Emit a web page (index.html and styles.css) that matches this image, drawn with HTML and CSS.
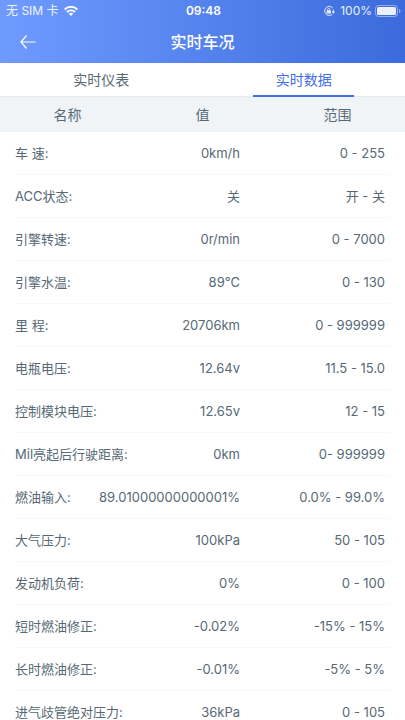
FILE: index.html
```html
<!DOCTYPE html>
<html lang="zh-CN">
<head>
<meta charset="utf-8">
<meta name="viewport" content="width=device-width, initial-scale=1">
<title>实时车况</title>
<link rel="stylesheet" href="styles.css">
</head>
<body>
<header class="header">
  <div class="status">
    <div class="status-left">
      <span>无 SIM 卡</span>
      <svg class="wifi" viewBox="0 0 14 10" aria-hidden="true">
        <path d="M.7 3.500C4.300-.1 9.700-.1 13.300 3.500M3 6C5.200 3.800 8.800 3.800 11 6" fill="none" stroke="currentColor" stroke-width="1.900"/>
        <path d="M4.700 7.700Q7 5.700 9.300 7.700L7 10Z" fill="currentColor"/>
      </svg>
    </div>
    <time class="clock">09:48</time>
    <div class="status-right">
      <svg class="lock" viewBox="0 0 12 12" aria-hidden="true">
        <path d="M9.700 3A4.500 4.500 0 1 0 9.200 9.300M10.300 4.500Q10.700 6 10.200 7.300" fill="none" stroke="currentColor"/>
        <path d="M8.600 6.500H12L10.300 8.700Z" fill="currentColor"/>
        <rect x="3.700" y="5.300" width="4.200" height="3.200" rx=".5" fill="currentColor"/>
        <path d="M4.600 5.500V4.600a1.200 1.200 0 0 1 2.400 0V5.500" fill="none" stroke="currentColor" stroke-width=".8"/>
      </svg>
      <span class="charge">100%
        <svg class="battery" viewBox="0 0 26 12" aria-hidden="true">
          <rect x=".5" y=".5" width="22" height="11" rx="3" fill="none" stroke="currentColor" opacity=".5"/>
          <rect x="2" y="2" width="19" height="8" rx="1.500" fill="currentColor"/>
          <path d="M24 4Q25.500 4.500 25.500 6T24 8Z" fill="currentColor" opacity=".5"/>
        </svg>
      </span>
    </div>
  </div>
  <div class="titlebar">
    <button class="back" type="button" aria-label="返回">
      <svg viewBox="0 0 16 14" aria-hidden="true"><path d="M6.500 .5L1 7l5.500 6.500M1 7h14.500" fill="none" stroke="currentColor" stroke-width="1.200"/></svg>
    </button>
    <h1 class="title">实时车况</h1>
  </div>
</header>
<nav class="tabs">
  <a class="tab" href="#gauges">实时仪表</a>
  <a class="tab active" href="#data" aria-current="page">实时数据</a>
</nav>
<main id="data">
  <table class="table">
    <thead><tr><th>名称</th><th>值</th><th>范围</th></tr></thead>
    <tbody>
      <tr><td class="name">车 速:</td><td class="value">0km/h</td><td class="range">0 - 255</td></tr>
      <tr><td class="name">ACC状态:</td><td class="value">关</td><td class="range">开 - 关</td></tr>
      <tr><td class="name">引擎转速:</td><td class="value">0r/min</td><td class="range">0 - 7000</td></tr>
      <tr><td class="name">引擎水温:</td><td class="value">89°C</td><td class="range">0 - 130</td></tr>
      <tr><td class="name">里 程:</td><td class="value">20706km</td><td class="range">0 - 999999</td></tr>
      <tr><td class="name">电瓶电压:</td><td class="value">12.64v</td><td class="range">11.5 - 15.0</td></tr>
      <tr><td class="name">控制模块电压:</td><td class="value">12.65v</td><td class="range">12 - 15</td></tr>
      <tr><td class="name">Mil亮起后行驶距离:</td><td class="value">0km</td><td class="range">0- 999999</td></tr>
      <tr><td class="name">燃油输入:</td><td class="value">89.01000000000001%</td><td class="range">0.0% - 99.0%</td></tr>
      <tr><td class="name">大气压力:</td><td class="value">100kPa</td><td class="range">50 - 105</td></tr>
      <tr><td class="name">发动机负荷:</td><td class="value">0%</td><td class="range">0 - 100</td></tr>
      <tr><td class="name">短时燃油修正:</td><td class="value">-0.02%</td><td class="range">-15% - 15%</td></tr>
      <tr><td class="name">长时燃油修正:</td><td class="value">-0.01%</td><td class="range">-5% - 5%</td></tr>
      <tr><td class="name">进气歧管绝对压力:</td><td class="value">36kPa</td><td class="range">0 - 105</td></tr>
    </tbody>
  </table>
</main>
</body>
</html>
```
FILE: styles.css
```css
* {
  box-sizing: border-box;
}

html {
  scrollbar-width: none;
}

body {
  margin: 0;
  background: #fff;
  color: #566975;
  font: 13px/20px Inter, "Noto Sans CJK SC", sans-serif;
}

.header {
  color: #fff;
  background: linear-gradient(90deg, #6f9bff, #3b6bdc);
}

.status {
  display: grid;
  grid-template-columns: 1fr auto 1fr;
  align-items: center;
  height: 21px;
  padding: 0 4px 0 6px;
  font-size: 12px;
}

.status-left,
.status-right,
.charge {
  display: flex;
  align-items: center;
}

.status-left {
  gap: 5px;
}

.status-right {
  justify-content: flex-end;
  gap: 5px;
}

.charge {
  gap: 3px;
}

.status-left span,
.status-right {
  opacity: 0.9;
}

.clock {
  font-weight: 600;
}

.wifi {
  width: 14px;
  height: 10px;
}

.lock {
  width: 12px;
  height: 12px;
}

.battery {
  width: 26px;
  height: 12px;
}

.titlebar {
  display: grid;
  grid-template-columns: 40px 1fr 40px;
  align-items: center;
  height: 42px;
}

.back {
  display: flex;
  height: 40px;
  padding: 0 0 0 20px;
  align-items: center;
  border: 0;
  background: none;
  color: inherit;
}

.back svg {
  width: 16px;
  height: 14px;
  flex: none;
}

.title {
  margin: 0;
  text-align: center;
  font-size: 16px;
  font-weight: 500;
}

.tabs {
  display: flex;
  height: 34px;
  border-bottom: 1px solid #e6eaed;
}

.tab {
  flex: 1;
  display: flex;
  justify-content: center;
  align-items: center;
  position: relative;
  color: inherit;
  font-size: 14px;
  text-decoration: none;
}

.active {
  color: #3f6fe2;
}

.active::after {
  content: "";
  position: absolute;
  left: 25%;
  right: 25%;
  bottom: -1px;
  height: 2px;
  background: #3f6fe2;
}

.table,
.table thead,
.table tbody {
  display: block;
}

.table thead tr {
  display: grid;
  grid-template-columns: repeat(3, 1fr);
  align-items: center;
  height: 35px;
  background: #f0f4f7;
}

.table th {
  padding: 0;
  font-size: 14px;
  font-weight: 400;
}

.table tbody tr {
  display: flex;
  align-items: center;
  height: 43px;
  margin: 0 15px;
  border-bottom: 1px solid #f6f7f8;
}

.table td {
  padding: 0;
  white-space: nowrap;
}

.value {
  flex: 1;
  text-align: right;
}

.table .range {
  width: 40%;
  padding-right: 5px;
  text-align: right;
}
```
